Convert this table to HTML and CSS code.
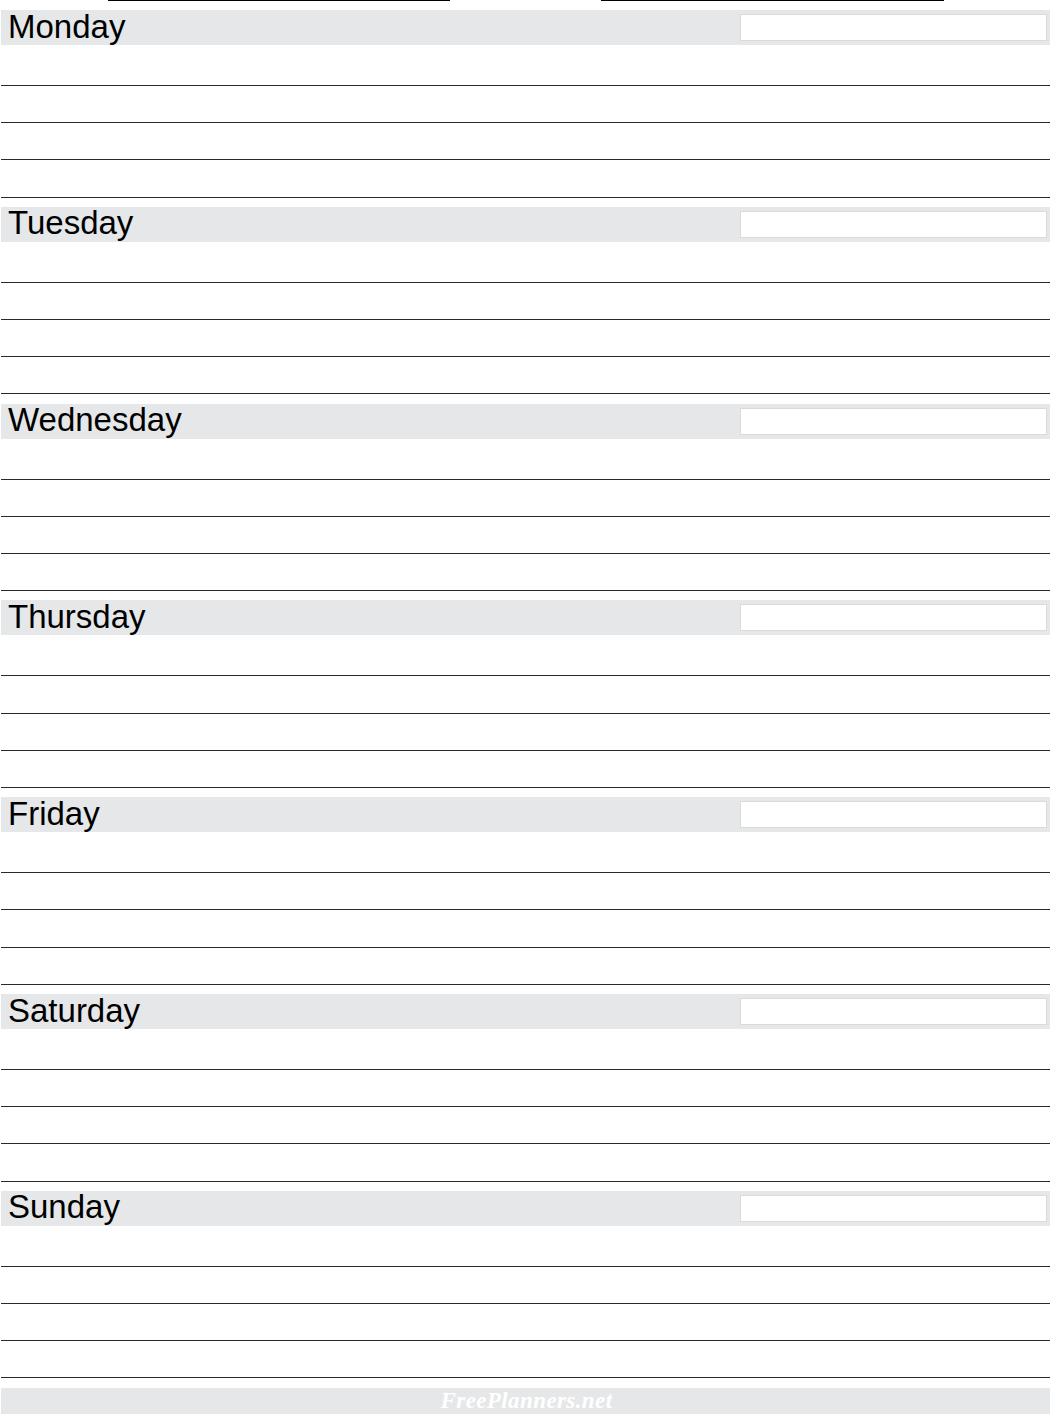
FILE: index.html
```html
<!DOCTYPE html>
<html lang="en">
<head>
<meta charset="utf-8">
<title>Weekly Planner</title>
<link rel="stylesheet" href="styles.css">
</head>
<body>
<div class="top">
  <div class="field field-a"></div>
  <div class="field field-b"></div>
</div>
<main class="planner">
  <section class="day">
    <div class="day-head"><span class="day-name">Monday</span><span class="note-box"></span></div>
    <div class="line first"></div><div class="line"></div><div class="line"></div><div class="line"></div>
  </section>
  <section class="day">
    <div class="day-head"><span class="day-name">Tuesday</span><span class="note-box"></span></div>
    <div class="line first"></div><div class="line"></div><div class="line"></div><div class="line"></div>
  </section>
  <section class="day">
    <div class="day-head"><span class="day-name">Wednesday</span><span class="note-box"></span></div>
    <div class="line first"></div><div class="line"></div><div class="line"></div><div class="line"></div>
  </section>
  <section class="day">
    <div class="day-head"><span class="day-name">Thursday</span><span class="note-box"></span></div>
    <div class="line first"></div><div class="line"></div><div class="line"></div><div class="line"></div>
  </section>
  <section class="day">
    <div class="day-head"><span class="day-name">Friday</span><span class="note-box"></span></div>
    <div class="line first"></div><div class="line"></div><div class="line"></div><div class="line"></div>
  </section>
  <section class="day">
    <div class="day-head"><span class="day-name">Saturday</span><span class="note-box"></span></div>
    <div class="line first"></div><div class="line"></div><div class="line"></div><div class="line"></div>
  </section>
  <section class="day">
    <div class="day-head"><span class="day-name">Sunday</span><span class="note-box"></span></div>
    <div class="line first"></div><div class="line"></div><div class="line"></div><div class="line"></div>
  </section>
  <footer class="footer"><span class="brand">FreePlanners.net</span></footer>
</main>
</body>
</html>
```

FILE: styles.css
```css
html, body {
  margin: 0;
  padding: 0;
  background: #ffffff;
}

body {
  font-family: "Liberation Sans", Arial, sans-serif;
  color: #000;
  width: 1051px;
  height: 1414px;
  overflow: hidden;
}

.top {
  display: flex;
  height: 10px;
  padding-left: 108px;
  gap: 151px;
  box-sizing: border-box;
}

.field {
  height: 0;
  border-top: 1px solid #000;
}

.field-a { width: 342px; }
.field-b { width: 343px; }

.planner {
  margin-left: 1px;
  width: 1049px;
}

.day {
  display: flex;
  flex-direction: column;
  margin-bottom: 9.26px;
}

.day-head {
  height: 35px;
  background: #e6e7e8;
  display: flex;
  align-items: center;
  justify-content: space-between;
  padding-left: 7px;
  padding-right: 3px;
  box-sizing: border-box;
}

.day-name {
  font-size: 33px;
  line-height: 33px;
  padding-bottom: 3px;
}

.note-box {
  width: 307px;
  height: 27px;
  background: #ffffff;
  border: 1px solid #d9dadb;
  box-sizing: border-box;
}

.line {
  height: 37.2px;
  border-bottom: 1px solid #2a2a2a;
  box-sizing: border-box;
}

.line.first {
  height: 41px;
}

.footer {
  height: 26px;
  background: #e6e7e8;
  display: flex;
  align-items: center;
  justify-content: center;
}

.brand {
  font-family: "Liberation Serif", "DejaVu Serif", serif;
  font-style: italic;
  font-weight: bold;
  font-size: 23px;
  color: #ffffff;
  letter-spacing: 0.4px;
  padding-left: 2px;
}
```
